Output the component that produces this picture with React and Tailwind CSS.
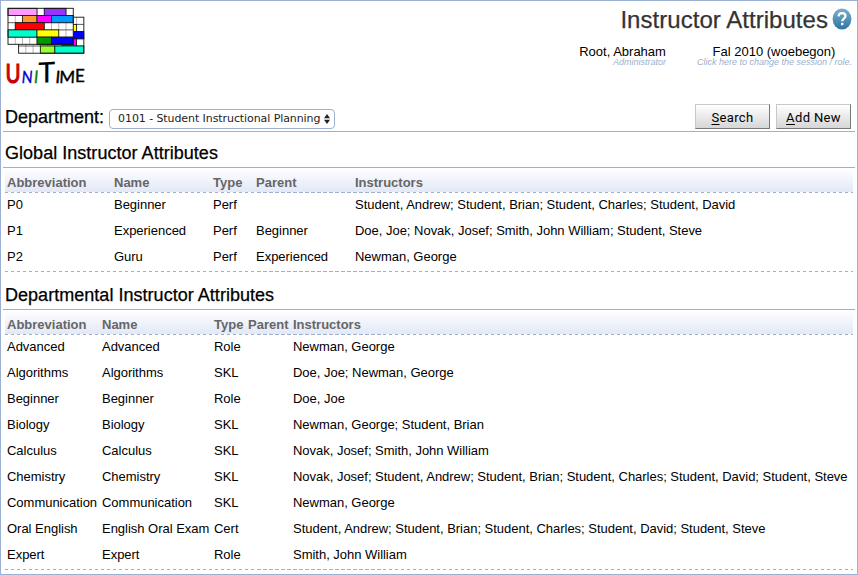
import React from "react";

const GLOBAL = [
  ["P0", "Beginner", "Perf", "", "Student, Andrew; Student, Brian; Student, Charles; Student, David"],
  ["P1", "Experienced", "Perf", "Beginner", "Doe, Joe; Novak, Josef; Smith, John William; Student, Steve"],
  ["P2", "Guru", "Perf", "Experienced", "Newman, George"],
];

const DEPARTMENTAL = [
  ["Advanced", "Advanced", "Role", "", "Newman, George"],
  ["Algorithms", "Algorithms", "SKL", "", "Doe, Joe; Newman, George"],
  ["Beginner", "Beginner", "Role", "", "Doe, Joe"],
  ["Biology", "Biology", "SKL", "", "Newman, George; Student, Brian"],
  ["Calculus", "Calculus", "SKL", "", "Novak, Josef; Smith, John William"],
  ["Chemistry", "Chemistry", "SKL", "", "Novak, Josef; Student, Andrew; Student, Brian; Student, Charles; Student, David; Student, Steve"],
  ["Communication", "Communication", "SKL", "", "Newman, George"],
  ["Oral English", "English Oral Exam", "Cert", "", "Student, Andrew; Student, Brian; Student, Charles; Student, David; Student, Steve"],
  ["Expert", "Expert", "Role", "", "Smith, John William"],
];

const HEADERS = ["Abbreviation", "Name", "Type", "Parent", "Instructors"];

// Coloured blocks of the logo's timetable: column, row, span, colour
const BACK = [
  [7, 1, 1, "#ffff00"],
  [7, 2, 2, "#0000ff"],
  [6, 3, 2, "#ff00ff"],
  [3, 4, 2, "#99ff33"],
  [5, 4, 4, "#00ffcc"],
];
const FRONT = [
  [0, 0, 4, "#ff99ff"],
  [5, 0, 3, "#9933ff"],
  [2, 1, 2, "#ff9933"],
  [4, 1, 2, "#ff00ff"],
  [6, 1, 3, "#0099ff"],
  [1, 2, 4, "#ff0000"],
  [0, 3, 4, "#00ffcc"],
  [4, 3, 3, "#ffff00"],
  [4, 4, 2, "#009900"],
  [6, 4, 3, "#0000ff"],
];

function Timetable({ x, y, blocks }) {
  const w = 7.25;
  const h = 7.2;
  const lines = [1, 2, 3, 4, 5, 6, 7, 8];
  return (
    <g transform={`translate(${x} ${y})`}>
      <rect width={w * 9} height={h * 5} fill="#fff" />
      {lines.map((i) => (
        <path key={i} d={`M${i * w} 0V${h * 5}`} stroke="#999" strokeWidth="0.7" />
      ))}
      {[1, 2, 3, 4].map((i) => (
        <path key={i} d={`M0 ${i * h}H${w * 9}`} stroke="#333" strokeWidth="0.8" />
      ))}
      {blocks.map(([c, r, s, fill]) => (
        <rect key={`${c}-${r}`} x={c * w} y={r * h} width={s * w} height={h} fill={fill} stroke="#111" strokeWidth="0.8" />
      ))}
      <rect width={w * 9} height={h * 5} fill="none" stroke="#111" strokeWidth="0.9" />
    </g>
  );
}

function Logo() {
  return (
    <svg className="block h-[84px] w-[84px] overflow-visible" viewBox="4 4 84 84" fontFamily="Lato, 'Open Sans', sans-serif">
      <Timetable x={18.6} y={17.2} blocks={BACK} />
      <Timetable x={8} y={8.3} blocks={FRONT} />
      <g fill="#000" stroke="#000" strokeWidth="0.4">
        <text transform="translate(5.6 82.6) scale(0.76 1)" fontSize="27" fill="#cc0000" stroke="#cc0000" strokeWidth="1.2">U</text>
        <text transform="translate(21.3 82.5) scale(0.84 1) skewX(-6)" fontSize="17" fill="#0000cc" stroke="#0000cc">N</text>
        <text transform="translate(33.4 82.5) scale(0.9 1) skewX(-6)" fontSize="17" fill="#008000" stroke="#008000">I</text>
        <text transform="translate(38.6 82.8) rotate(-3) skewX(-3)" fontSize="28" strokeWidth="0.3">T</text>
        <text transform="translate(55 82.5) skewX(-5)" fontSize="17">I</text>
        <text transform="translate(59 82.5) skewX(-3)" fontSize="17">M</text>
        <text transform="translate(75 82)" fontSize="17">E</text>
      </g>
    </svg>
  );
}

function HelpIcon() {
  return (
    <svg className="-mt-[3px] block h-[22px] w-[20px]" viewBox="0 0 20 22">
      <defs>
        <linearGradient id="help" x1="0" y1="0" x2="0" y2="1">
          <stop offset="0" stopColor="#79b0cf" />
          <stop offset="1" stopColor="#2f75a0" />
        </linearGradient>
      </defs>
      <ellipse cx="10" cy="11" rx="9.4" ry="10.6" fill="url(#help)" />
      <path d="M6.6 8.4C6.7 6.2 8 5.2 10 5.2s3.5 1.1 3.5 2.9c0 2.4-3.3 2.6-3.3 5.2" fill="none" stroke="#fff" strokeWidth="2.3" />
      <rect x="9" y="14.8" width="2.4" height="2.4" fill="#fff" />
    </svg>
  );
}

function Dashes() {
  return <div className="mx-0.5 h-px bg-[repeating-linear-gradient(90deg,#9cb0ce_0_3.5px,transparent_3.5px_6px)]" />;
}

function Section({ title, cols, rows }) {
  return (
    <section>
      <h2 className="h-9 border-b border-[#9cb0d5] pt-[11px] pl-0.5 text-[18px] leading-5 tracking-[0.03px] whitespace-nowrap [-webkit-text-stroke:0.25px_#000]">
        {title}
      </h2>
      <div className={`mx-0.5 grid h-6 bg-linear-to-b from-white to-[#e2e8f6] pt-[7px] pl-0.5 text-[13px] leading-[15px] font-bold text-[#666] ${cols}`}>
        {HEADERS.map((h) => (
          <div key={h} className="whitespace-nowrap">{h}</div>
        ))}
      </div>
      <Dashes />
      {rows.map((row) => (
        <div key={row[0]} className={`mx-0.5 grid h-[26px] pt-1 pl-0.5 text-[13px] leading-[15px] tracking-[-0.02px] ${cols}`}>
          {row.map((cell, i) => (
            <div key={i} className="whitespace-nowrap">{cell}</div>
          ))}
        </div>
      ))}
      <Dashes />
    </section>
  );
}

function Button({ hotkey, rest }) {
  return (
    <button className="h-[25px] w-[75px] border border-t-[#c8c8c8] border-r-[#777] border-b-[#777] border-l-[#c8c8c8] bg-linear-to-b from-white to-[#d6d6d6] pt-0.5 font-[Roboto,sans-serif] text-[13px] leading-4 tracking-[0.35px] whitespace-nowrap">
      <span className="underline underline-offset-2">{hotkey}</span>
      {rest}
    </button>
  );
}

export default function App() {
  return (
    <div className="h-[575px] w-[858px] overflow-hidden border border-[#9cb0d5] bg-white font-['Liberation_Sans',Arial,sans-serif] text-black">
      <header className="flex h-[101px] justify-between pt-[3px] pl-[3px]">
        <Logo />
        <div className="flex flex-col items-end pr-[5px]">
          <div className="flex h-8 items-center gap-1">
            <h1 className="text-[24px] leading-8 tracking-[0.04px] whitespace-nowrap text-[#333] [-webkit-text-stroke:0.25px_#333]">Instructor Attributes</h1>
            <HelpIcon />
          </div>
          <div className="mt-[9px] flex gap-[31px] text-[13px] whitespace-nowrap">
            <div className="text-right">
              <div className="leading-[14px]">Root, Abraham</div>
              <div className="-mt-0.5 text-[9px] leading-[10px] text-[#9cb0ce] italic">Administrator</div>
            </div>
            <div className="text-center">
              <div className="pr-px leading-[14px]">Fal 2010 (woebegon)</div>
              <div className="-mt-0.5 text-[9px] leading-[10px] text-[#9cb0ce] italic">Click here to change the session / role.</div>
            </div>
          </div>
        </div>
      </header>
      <main className="mr-0.5 ml-0.5">
        <div className="flex h-[30px] justify-between border-b border-[#9cb0d5] pt-0.5 pr-1 pl-0.5">
          <div className="flex gap-[5px]">
            <label className="pt-[3px] text-[18px] leading-5 [-webkit-text-stroke:0.25px_#000]">Department:</label>
            <div className="mt-[5px] flex h-5 w-[226px] items-center justify-between rounded-[4px] border border-[#9cb0d5] pr-1 pl-2 font-['DejaVu_Sans',sans-serif] text-[11px] tracking-[-0.08px] whitespace-nowrap text-[#222]">
              <span>0101 - Student Instructional Planning</span>
              <svg className="h-[10px] w-[6px]" viewBox="0 0 6 10">
                <path d="M0 4.2L3 0L6 4.2ZM0 5.8L3 10L6 5.8Z" fill="#222" />
              </svg>
            </div>
          </div>
          <div className="flex gap-1.5">
            <Button hotkey="S" rest="earch" />
            <Button hotkey="A" rest="dd New" />
          </div>
        </div>
        <Section title="Global Instructor Attributes" cols="grid-cols-[107px_99px_43px_99px_1fr]" rows={GLOBAL} />
        <div className="h-0.5" />
        <Section title="Departmental Instructor Attributes" cols="grid-cols-[95px_112px_34px_45px_1fr]" rows={DEPARTMENTAL} />
      </main>
    </div>
  );
}
